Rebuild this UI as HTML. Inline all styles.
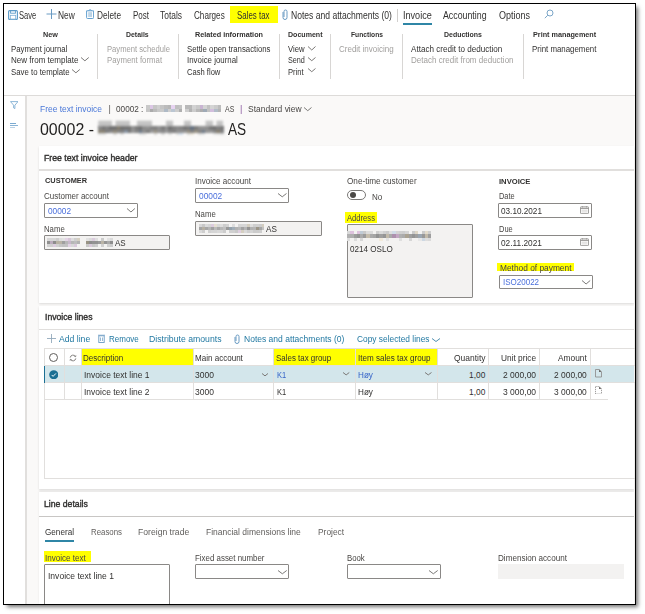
<!DOCTYPE html>
<html><head><meta charset="utf-8"><style>
html,body{margin:0;padding:0;width:645px;height:614px;overflow:hidden;background:#fff}
body{position:relative;font-family:"Liberation Sans",sans-serif}
.t{position:absolute;white-space:nowrap}
.r{position:absolute}
.blur{position:absolute;filter:blur(1px);opacity:0.9}
#clip{position:absolute;left:0;top:0;width:645px;height:614px;clip-path:inset(4px 10px 10px 4px);background:#fff}
#frame{position:absolute;left:3px;top:3px;width:631px;height:600px;border:1px solid #000;box-shadow:3px 3px 4px -1px rgba(0,0,0,0.55)}
</style></head><body>
<div id="clip">
<div class="r" style="left:27px;top:96px;width:608px;height:508px;background:#faf9f8"></div>
<div class="r" style="left:25px;top:96px;width:1.6px;height:508px;background:#e1dfdd"></div>
<div class="r" style="left:4px;top:94.6px;width:631px;height:1.4px;background:#dddbd9"></div>
<svg class="r" style="left:7.5px;top:9.5px" width="10" height="10" viewBox="0 0 10 10"><rect x="0.6" y="0.6" width="8.8" height="8.8" rx="1" fill="none" stroke="#5a9ac8" stroke-width="1.1"/><rect x="2.6" y="0.6" width="4.8" height="2.6" fill="none" stroke="#5a9ac8" stroke-width="0.9"/><rect x="2.3" y="5.3" width="5.4" height="4.1" fill="none" stroke="#7aaed4" stroke-width="0.8"/></svg>
<div class="t" style="left:18.50px;top:12.00px;font-size:9.3px;line-height:9.3px;color:#323130;font-weight:400;transform:scale(0.8159,1.1667);transform-origin:0 7px;">Save</div>
<svg class="r" style="left:46px;top:9px" width="11" height="10" viewBox="0 0 11 10"><path d="M5.5 0 V10 M0.5 5 H10.5" stroke="#6a9bc3" stroke-width="1" fill="none"/></svg>
<div class="t" style="left:57.70px;top:12.00px;font-size:9.3px;line-height:9.3px;color:#323130;font-weight:400;transform:scale(0.9010,1.1667);transform-origin:0 7px;">New</div>
<svg class="r" style="left:86px;top:9px" width="8.2" height="10" viewBox="0 0 8.2 10"><path d="M2.4 1.6 Q4.1 -0.2 5.8 1.6" fill="none" stroke="#4f94c8" stroke-width="0.9"/><path d="M0.6 1.8 H7.6 V8.6 Q7.6 9.5 6.7 9.5 H1.5 Q0.6 9.5 0.6 8.6 Z" fill="none" stroke="#62a0d0" stroke-width="1"/><path d="M2.9 3.2 V8 M4.1 3.2 V8 M5.3 3.2 V8" stroke="#7aa8cc" stroke-width="0.7"/></svg>
<div class="t" style="left:97.00px;top:12.00px;font-size:9.3px;line-height:9.3px;color:#323130;font-weight:400;transform:scale(0.8930,1.1667);transform-origin:0 7px;">Delete</div>
<div class="t" style="left:133.00px;top:12.00px;font-size:9.3px;line-height:9.3px;color:#323130;font-weight:400;transform:scale(0.8602,1.1667);transform-origin:0 7px;">Post</div>
<div class="t" style="left:160.30px;top:12.00px;font-size:9.3px;line-height:9.3px;color:#323130;font-weight:400;transform:scale(0.9064,1.1667);transform-origin:0 7px;">Totals</div>
<div class="t" style="left:193.70px;top:12.00px;font-size:9.3px;line-height:9.3px;color:#323130;font-weight:400;transform:scale(0.8733,1.1667);transform-origin:0 7px;">Charges</div>
<div class="r" style="left:230px;top:6px;width:48.4px;height:17.3px;background:#ffff00"></div>
<div class="t" style="left:236.50px;top:12.00px;font-size:9.3px;line-height:9.3px;color:#323130;font-weight:400;transform:scale(0.8492,1.1667);transform-origin:0 7px;">Sales tax</div>
<svg class="r" style="left:282px;top:8.5px" width="6" height="11" viewBox="0 0 6 11"><path d="M1 3 V8.5 A2 2 0 0 0 5 8.5 V2.5 A1.5 1.5 0 0 0 2 2.5 V8" fill="none" stroke="#6a9bc3" stroke-width="1"/></svg>
<div class="t" style="left:291.00px;top:12.00px;font-size:9.3px;line-height:9.3px;color:#323130;font-weight:400;transform:scale(0.9215,1.1667);transform-origin:0 7px;">Notes and attachments (0)</div>
<div class="r" style="left:396.5px;top:9px;width:1px;height:13px;background:#d2d0ce"></div>
<div class="t" style="left:403.00px;top:12.00px;font-size:9.3px;line-height:9.3px;color:#323130;font-weight:400;transform:scale(0.9769,1.1667);transform-origin:0 7px;">Invoice</div>
<div class="r" style="left:403px;top:23px;width:29px;height:1.6px;background:#2f86a6"></div>
<div class="t" style="left:443.40px;top:12.00px;font-size:9.3px;line-height:9.3px;color:#323130;font-weight:400;transform:scale(0.9471,1.1667);transform-origin:0 7px;">Accounting</div>
<div class="t" style="left:499.00px;top:12.00px;font-size:9.3px;line-height:9.3px;color:#323130;font-weight:400;transform:scale(0.9676,1.1667);transform-origin:0 7px;">Options</div>
<svg class="r" style="left:544px;top:9px" width="10" height="10" viewBox="0 0 10 10"><circle cx="6" cy="4" r="3" fill="none" stroke="#7ba6c8" stroke-width="1"/><path d="M3.8 6.2 L0.8 9.2" stroke="#7ba6c8" stroke-width="1"/></svg>
<div class="t" style="left:42.80px;top:31.00px;font-size:7.2px;line-height:7.2px;color:#323130;font-weight:700;transform:scale(1.0046,1.0000);transform-origin:0 6px;">New</div>
<div class="t" style="left:10.60px;top:45.00px;font-size:8.3px;line-height:8.3px;color:#323130;font-weight:400;transform:scale(0.9405,1.0000);transform-origin:0 7px;">Payment journal</div>
<div class="t" style="left:10.60px;top:56.00px;font-size:8.3px;line-height:8.3px;color:#323130;font-weight:400;transform:scale(0.9679,1.0000);transform-origin:0 7px;">New from template</div>
<svg class="r" style="left:80.1px;top:56px;overflow:visible" width="9.80" height="6.30" viewBox="0 0 9.80 6.30"><path d="M1 1.50 L4.90 4.80 L8.80 1.50" fill="none" stroke="#7a7876" stroke-width="1"/></svg>
<div class="t" style="left:10.60px;top:68.00px;font-size:8.3px;line-height:8.3px;color:#323130;font-weight:400;transform:scale(0.9407,1.0000);transform-origin:0 7px;">Save to template</div>
<svg class="r" style="left:71.1px;top:67.5px;overflow:visible" width="9.80" height="6.30" viewBox="0 0 9.80 6.30"><path d="M1 1.50 L4.90 4.80 L8.80 1.50" fill="none" stroke="#7a7876" stroke-width="1"/></svg>
<div class="r" style="left:97px;top:34px;width:1px;height:45px;background:#d8d6d4"></div>
<div class="t" style="left:126.30px;top:31.00px;font-size:7.2px;line-height:7.2px;color:#323130;font-weight:700;transform:scale(0.9612,1.0000);transform-origin:0 6px;">Details</div>
<div class="t" style="left:106.50px;top:45.00px;font-size:8.3px;line-height:8.3px;color:#a19f9d;font-weight:400;transform:scale(0.9214,1.0000);transform-origin:0 7px;">Payment schedule</div>
<div class="t" style="left:106.50px;top:56.00px;font-size:8.3px;line-height:8.3px;color:#a19f9d;font-weight:400;transform:scale(0.9403,1.0000);transform-origin:0 7px;">Payment format</div>
<div class="r" style="left:177.5px;top:34px;width:1px;height:45px;background:#d8d6d4"></div>
<div class="t" style="left:194.90px;top:31.00px;font-size:7.2px;line-height:7.2px;color:#323130;font-weight:700;transform:scale(1.0073,1.0000);transform-origin:0 6px;">Related information</div>
<div class="t" style="left:187.00px;top:45.00px;font-size:8.3px;line-height:8.3px;color:#323130;font-weight:400;transform:scale(0.9376,1.0000);transform-origin:0 7px;">Settle open transactions</div>
<div class="t" style="left:187.00px;top:56.00px;font-size:8.3px;line-height:8.3px;color:#323130;font-weight:400;transform:scale(0.9489,1.0000);transform-origin:0 7px;">Invoice journal</div>
<div class="t" style="left:187.00px;top:68.00px;font-size:8.3px;line-height:8.3px;color:#323130;font-weight:400;transform:scale(0.9156,1.0000);transform-origin:0 7px;">Cash flow</div>
<div class="r" style="left:278.5px;top:34px;width:1px;height:45px;background:#d8d6d4"></div>
<div class="t" style="left:288.00px;top:31.00px;font-size:7.2px;line-height:7.2px;color:#323130;font-weight:700;transform:scale(0.9827,1.0000);transform-origin:0 6px;">Document</div>
<div class="t" style="left:288.40px;top:45.00px;font-size:8.3px;line-height:8.3px;color:#323130;font-weight:400;transform:scale(0.9302,1.0000);transform-origin:0 7px;">View</div>
<svg class="r" style="left:307.2px;top:45.1px;overflow:visible" width="9.50" height="6.50" viewBox="0 0 9.50 6.50"><path d="M1 1.50 L4.75 5.00 L8.50 1.50" fill="none" stroke="#7a7876" stroke-width="1"/></svg>
<div class="t" style="left:288.40px;top:56.00px;font-size:8.3px;line-height:8.3px;color:#323130;font-weight:400;transform:scale(0.8720,1.0000);transform-origin:0 7px;">Send</div>
<svg class="r" style="left:307.2px;top:56.3px;overflow:visible" width="9.50" height="6.20" viewBox="0 0 9.50 6.20"><path d="M1 1.50 L4.75 4.70 L8.50 1.50" fill="none" stroke="#7a7876" stroke-width="1"/></svg>
<div class="t" style="left:288.40px;top:68.00px;font-size:8.3px;line-height:8.3px;color:#323130;font-weight:400;transform:scale(0.9146,1.0000);transform-origin:0 7px;">Print</div>
<svg class="r" style="left:307.2px;top:67.4px;overflow:visible" width="9.50" height="6.20" viewBox="0 0 9.50 6.20"><path d="M1 1.50 L4.75 4.70 L8.50 1.50" fill="none" stroke="#7a7876" stroke-width="1"/></svg>
<div class="r" style="left:330px;top:34px;width:1px;height:45px;background:#d8d6d4"></div>
<div class="t" style="left:350.60px;top:31.00px;font-size:7.2px;line-height:7.2px;color:#323130;font-weight:700;transform:scale(0.9298,1.0000);transform-origin:0 6px;">Functions</div>
<div class="t" style="left:339.00px;top:45.00px;font-size:8.3px;line-height:8.3px;color:#a19f9d;font-weight:400;transform:scale(0.9642,1.0000);transform-origin:0 7px;">Credit invoicing</div>
<div class="r" style="left:402px;top:34px;width:1px;height:45px;background:#d8d6d4"></div>
<div class="t" style="left:444.00px;top:31.00px;font-size:7.2px;line-height:7.2px;color:#323130;font-weight:700;transform:scale(0.9693,1.0000);transform-origin:0 6px;">Deductions</div>
<div class="t" style="left:411.40px;top:45.00px;font-size:8.3px;line-height:8.3px;color:#323130;font-weight:400;transform:scale(0.9758,1.0000);transform-origin:0 7px;">Attach credit to deduction</div>
<div class="t" style="left:411.40px;top:56.00px;font-size:8.3px;line-height:8.3px;color:#a19f9d;font-weight:400;transform:scale(0.9669,1.0000);transform-origin:0 7px;">Detach credit from deduction</div>
<div class="r" style="left:522.7px;top:34px;width:1px;height:45px;background:#d8d6d4"></div>
<div class="t" style="left:532.60px;top:31.00px;font-size:7.2px;line-height:7.2px;color:#323130;font-weight:700;transform:scale(1.0076,1.0000);transform-origin:0 6px;">Print management</div>
<div class="t" style="left:531.60px;top:45.00px;font-size:8.3px;line-height:8.3px;color:#323130;font-weight:400;transform:scale(0.9497,1.0000);transform-origin:0 7px;">Print management</div>
<svg class="r" style="left:9.6px;top:101px" width="8.5" height="8" viewBox="0 0 8.5 8"><path d="M0.5 0.6 H8 L4.9 4.2 V7.6 L3.6 6.9 V4.2 Z" fill="none" stroke="#7aaad0" stroke-width="0.85"/></svg>
<div class="r" style="left:10px;top:122.7px;width:6px;height:1px;background:#7aaad0"></div>
<div class="r" style="left:10px;top:124.8px;width:8px;height:1px;background:#8ab4d6"></div>
<div class="r" style="left:10px;top:126.8px;width:5px;height:1px;background:#bcd2e4"></div>
<div class="t" style="left:40.00px;top:105.00px;font-size:9.1px;line-height:9.1px;color:#4a78d8;font-weight:400;transform:scale(0.9289,1.0833);transform-origin:0 7px;">Free text invoice</div>
<div class="t" style="left:108.50px;top:105.00px;font-size:9.1px;line-height:9.1px;color:#605e5c;font-weight:400;transform:scale(1.0000,1.0833);transform-origin:0 7px;">|</div>
<div class="t" style="left:115.60px;top:105.00px;font-size:9.1px;line-height:9.1px;color:#484644;font-weight:400;transform:scale(0.9028,1.0833);transform-origin:0 7px;">00002 :</div>
<svg class="r" style="left:145.6px;top:104.9px;" width="36.20" height="7.00" viewBox="0 0 36.20 7.00" shape-rendering="crispEdges"><rect x="0.00" y="0.00" width="3.67" height="3.55" fill="rgb(201,201,201)"/><rect x="3.62" y="0.00" width="3.67" height="3.55" fill="rgb(219,199,229)"/><rect x="7.24" y="0.00" width="3.67" height="3.55" fill="rgb(198,198,198)"/><rect x="10.86" y="0.00" width="3.67" height="3.55" fill="rgb(207,207,207)"/><rect x="14.48" y="0.00" width="3.67" height="3.55" fill="rgb(196,196,196)"/><rect x="18.10" y="0.00" width="3.67" height="3.55" fill="rgb(187,187,187)"/><rect x="21.72" y="0.00" width="3.67" height="3.55" fill="rgb(182,182,182)"/><rect x="25.34" y="0.00" width="3.67" height="3.55" fill="rgb(231,211,241)"/><rect x="28.96" y="0.00" width="3.67" height="3.55" fill="rgb(191,191,191)"/><rect x="32.58" y="0.00" width="3.67" height="3.55" fill="rgb(195,195,195)"/><rect x="0.00" y="3.50" width="3.67" height="3.55" fill="rgb(198,198,198)"/><rect x="3.62" y="3.50" width="3.67" height="3.55" fill="rgb(171,171,171)"/><rect x="7.24" y="3.50" width="3.67" height="3.55" fill="rgb(187,187,187)"/><rect x="10.86" y="3.50" width="3.67" height="3.55" fill="rgb(200,200,200)"/><rect x="14.48" y="3.50" width="3.67" height="3.55" fill="rgb(202,202,202)"/><rect x="18.10" y="3.50" width="3.67" height="3.55" fill="rgb(175,186,198)"/><rect x="21.72" y="3.50" width="3.67" height="3.55" fill="rgb(206,206,206)"/><rect x="25.34" y="3.50" width="3.67" height="3.55" fill="rgb(187,198,210)"/><rect x="28.96" y="3.50" width="3.67" height="3.55" fill="rgb(205,205,205)"/><rect x="32.58" y="3.50" width="3.67" height="3.55" fill="rgb(175,175,175)"/></svg>
<svg class="r" style="left:185.3px;top:104.9px;" width="36.30" height="7.00" viewBox="0 0 36.30 7.00" shape-rendering="crispEdges"><rect x="0.00" y="0.00" width="3.68" height="3.55" fill="rgb(185,185,185)"/><rect x="3.63" y="0.00" width="3.68" height="3.55" fill="rgb(184,184,184)"/><rect x="7.26" y="0.00" width="3.68" height="3.55" fill="rgb(210,210,210)"/><rect x="10.89" y="0.00" width="3.68" height="3.55" fill="rgb(201,201,201)"/><rect x="14.52" y="0.00" width="3.68" height="3.55" fill="rgb(200,180,210)"/><rect x="18.15" y="0.00" width="3.68" height="3.55" fill="rgb(211,211,211)"/><rect x="21.78" y="0.00" width="3.68" height="3.55" fill="rgb(193,193,193)"/><rect x="25.41" y="0.00" width="3.68" height="3.55" fill="rgb(212,212,212)"/><rect x="29.04" y="0.00" width="3.68" height="3.55" fill="rgb(203,203,203)"/><rect x="32.67" y="0.00" width="3.68" height="3.55" fill="rgb(188,188,188)"/><rect x="0.00" y="3.50" width="3.68" height="3.55" fill="rgb(207,207,207)"/><rect x="3.63" y="3.50" width="3.68" height="3.55" fill="rgb(179,179,179)"/><rect x="7.26" y="3.50" width="3.68" height="3.55" fill="rgb(204,204,204)"/><rect x="10.89" y="3.50" width="3.68" height="3.55" fill="rgb(184,184,184)"/><rect x="14.52" y="3.50" width="3.68" height="3.55" fill="rgb(173,173,173)"/><rect x="18.15" y="3.50" width="3.68" height="3.55" fill="rgb(159,170,182)"/><rect x="21.78" y="3.50" width="3.68" height="3.55" fill="rgb(194,194,194)"/><rect x="25.41" y="3.50" width="3.68" height="3.55" fill="rgb(210,190,220)"/><rect x="29.04" y="3.50" width="3.68" height="3.55" fill="rgb(177,188,200)"/><rect x="32.67" y="3.50" width="3.68" height="3.55" fill="rgb(180,180,180)"/></svg>
<div class="t" style="left:224.70px;top:105.00px;font-size:9.1px;line-height:9.1px;color:#484644;font-weight:400;transform:scale(0.7655,1.0833);transform-origin:0 7px;">AS</div>
<div class="t" style="left:240.00px;top:105.00px;font-size:9.1px;line-height:9.1px;color:#8a5aa0;font-weight:400;transform:scale(1.0000,1.0833);transform-origin:0 7px;">|</div>
<div class="t" style="left:248.00px;top:105.00px;font-size:9.1px;line-height:9.1px;color:#484644;font-weight:400;transform:scale(0.9290,1.0833);transform-origin:0 7px;">Standard view</div>
<svg class="r" style="left:303px;top:105.7px;overflow:visible" width="9.50" height="6.20" viewBox="0 0 9.50 6.20"><path d="M1 1.50 L4.75 4.70 L8.50 1.50" fill="none" stroke="#7a7876" stroke-width="1"/></svg>
<div class="t" style="left:40.00px;top:122.00px;font-size:15.2px;line-height:15.2px;color:#201f1e;font-weight:400;transform:scale(1.0480,1.1000);transform-origin:0 13px;">00002 -</div>
<svg class="r" style="left:96px;top:118px;filter:blur(0.9px)" width="132" height="20" viewBox="0 0 132 20"><rect x="2.2" y="2.7" width="13.8" height="6.5" fill="#c4c4c4"/><rect x="19.5" y="2.7" width="14.5" height="6.5" fill="#c4c4c4"/><rect x="41.0" y="2.7" width="15.0" height="6.5" fill="#c4c4c4"/><rect x="70.0" y="2.7" width="7.0" height="6.5" fill="#c4c4c4"/><rect x="88.0" y="2.7" width="7.0" height="6.5" fill="#c4c4c4"/><rect x="109.6" y="2.7" width="7.4" height="6.5" fill="#c4c4c4"/><rect x="120.5" y="2.7" width="6.5" height="6.5" fill="#c4c4c4"/></svg>
<svg class="r" style="left:98.2px;top:126.2px;filter:blur(1px)" width="125.80" height="9.40" viewBox="0 0 125.80 9.40" shape-rendering="crispEdges"><rect x="0.00" y="0.00" width="3.75" height="3.65" fill="rgb(136,136,136)"/><rect x="3.70" y="0.00" width="3.75" height="3.65" fill="rgb(119,119,119)"/><rect x="7.40" y="0.00" width="3.75" height="3.65" fill="rgb(130,130,130)"/><rect x="11.10" y="0.00" width="3.75" height="3.65" fill="rgb(112,112,112)"/><rect x="14.80" y="0.00" width="3.75" height="3.65" fill="rgb(114,114,114)"/><rect x="18.50" y="0.00" width="3.75" height="3.65" fill="rgb(132,125,110)"/><rect x="22.20" y="0.00" width="3.75" height="3.65" fill="rgb(113,113,113)"/><rect x="25.90" y="0.00" width="3.75" height="3.65" fill="rgb(116,116,116)"/><rect x="29.60" y="0.00" width="3.75" height="3.65" fill="rgb(117,117,117)"/><rect x="33.30" y="0.00" width="3.75" height="3.65" fill="rgb(145,145,145)"/><rect x="37.00" y="0.00" width="3.75" height="3.65" fill="rgb(124,124,124)"/><rect x="40.70" y="0.00" width="3.75" height="3.65" fill="rgb(113,113,113)"/><rect x="44.40" y="0.00" width="3.75" height="3.65" fill="rgb(140,140,140)"/><rect x="48.10" y="0.00" width="3.75" height="3.65" fill="rgb(144,144,144)"/><rect x="51.80" y="0.00" width="3.75" height="3.65" fill="rgb(132,132,132)"/><rect x="55.50" y="0.00" width="3.75" height="3.65" fill="rgb(129,129,129)"/><rect x="59.20" y="0.00" width="3.75" height="3.65" fill="rgb(145,145,145)"/><rect x="62.90" y="0.00" width="3.75" height="3.65" fill="rgb(125,125,125)"/><rect x="66.60" y="0.00" width="3.75" height="3.65" fill="rgb(147,147,147)"/><rect x="70.30" y="0.00" width="3.75" height="3.65" fill="rgb(115,115,115)"/><rect x="74.00" y="0.00" width="3.75" height="3.65" fill="rgb(129,129,129)"/><rect x="77.70" y="0.00" width="3.75" height="3.65" fill="rgb(138,138,138)"/><rect x="81.40" y="0.00" width="3.75" height="3.65" fill="rgb(132,132,132)"/><rect x="85.10" y="0.00" width="3.75" height="3.65" fill="rgb(118,118,118)"/><rect x="88.80" y="0.00" width="3.75" height="3.65" fill="rgb(124,124,124)"/><rect x="92.50" y="0.00" width="3.75" height="3.65" fill="rgb(103,115,130)"/><rect x="96.20" y="0.00" width="3.75" height="3.65" fill="rgb(125,125,125)"/><rect x="99.90" y="0.00" width="3.75" height="3.65" fill="rgb(144,144,144)"/><rect x="103.60" y="0.00" width="3.75" height="3.65" fill="rgb(147,147,147)"/><rect x="107.30" y="0.00" width="3.75" height="3.65" fill="rgb(143,143,143)"/><rect x="111.00" y="0.00" width="3.75" height="3.65" fill="rgb(120,120,120)"/><rect x="114.70" y="0.00" width="3.75" height="3.65" fill="rgb(114,114,114)"/><rect x="118.40" y="0.00" width="3.75" height="3.65" fill="rgb(129,129,129)"/><rect x="122.10" y="0.00" width="3.75" height="3.65" fill="rgb(121,121,121)"/><rect x="0.00" y="3.60" width="3.75" height="3.65" fill="rgb(138,131,116)"/><rect x="3.70" y="3.60" width="3.75" height="3.65" fill="rgb(137,130,115)"/><rect x="7.40" y="3.60" width="3.75" height="3.65" fill="rgb(125,125,125)"/><rect x="11.10" y="3.60" width="3.75" height="3.65" fill="rgb(137,137,137)"/><rect x="14.80" y="3.60" width="3.75" height="3.65" fill="rgb(145,138,123)"/><rect x="18.50" y="3.60" width="3.75" height="3.65" fill="rgb(135,135,135)"/><rect x="22.20" y="3.60" width="3.75" height="3.65" fill="rgb(131,131,131)"/><rect x="25.90" y="3.60" width="3.75" height="3.65" fill="rgb(135,147,162)"/><rect x="29.60" y="3.60" width="3.75" height="3.65" fill="rgb(120,120,120)"/><rect x="33.30" y="3.60" width="3.75" height="3.65" fill="rgb(150,150,150)"/><rect x="37.00" y="3.60" width="3.75" height="3.65" fill="rgb(134,134,134)"/><rect x="40.70" y="3.60" width="3.75" height="3.65" fill="rgb(112,124,139)"/><rect x="44.40" y="3.60" width="3.75" height="3.65" fill="rgb(143,143,143)"/><rect x="48.10" y="3.60" width="3.75" height="3.65" fill="rgb(124,124,124)"/><rect x="51.80" y="3.60" width="3.75" height="3.65" fill="rgb(153,153,153)"/><rect x="55.50" y="3.60" width="3.75" height="3.65" fill="rgb(154,147,132)"/><rect x="59.20" y="3.60" width="3.75" height="3.65" fill="rgb(146,146,146)"/><rect x="62.90" y="3.60" width="3.75" height="3.65" fill="rgb(138,138,138)"/><rect x="66.60" y="3.60" width="3.75" height="3.65" fill="rgb(153,153,153)"/><rect x="70.30" y="3.60" width="3.75" height="3.65" fill="rgb(134,134,134)"/><rect x="74.00" y="3.60" width="3.75" height="3.65" fill="rgb(128,128,128)"/><rect x="77.70" y="3.60" width="3.75" height="3.65" fill="rgb(146,146,146)"/><rect x="81.40" y="3.60" width="3.75" height="3.65" fill="rgb(146,146,146)"/><rect x="85.10" y="3.60" width="3.75" height="3.65" fill="rgb(148,148,148)"/><rect x="88.80" y="3.60" width="3.75" height="3.65" fill="rgb(151,144,129)"/><rect x="92.50" y="3.60" width="3.75" height="3.65" fill="rgb(131,131,131)"/><rect x="96.20" y="3.60" width="3.75" height="3.65" fill="rgb(152,145,130)"/><rect x="99.90" y="3.60" width="3.75" height="3.65" fill="rgb(132,132,132)"/><rect x="103.60" y="3.60" width="3.75" height="3.65" fill="rgb(111,123,138)"/><rect x="107.30" y="3.60" width="3.75" height="3.65" fill="rgb(149,149,149)"/><rect x="111.00" y="3.60" width="3.75" height="3.65" fill="rgb(154,154,154)"/><rect x="114.70" y="3.60" width="3.75" height="3.65" fill="rgb(136,136,136)"/><rect x="118.40" y="3.60" width="3.75" height="3.65" fill="rgb(134,127,112)"/><rect x="122.10" y="3.60" width="3.75" height="3.65" fill="rgb(129,129,129)"/><rect x="0.00" y="7.20" width="3.75" height="2.25" fill="rgb(220,220,220)"/><rect x="3.70" y="7.20" width="3.75" height="2.25" fill="rgb(219,219,219)"/><rect x="14.80" y="7.20" width="3.75" height="2.25" fill="rgb(216,216,216)"/><rect x="22.20" y="7.20" width="3.75" height="2.25" fill="rgb(221,221,221)"/><rect x="40.70" y="7.20" width="3.75" height="2.25" fill="rgb(221,221,221)"/><rect x="44.40" y="7.20" width="3.75" height="2.25" fill="rgb(220,220,220)"/><rect x="55.50" y="7.20" width="3.75" height="2.25" fill="rgb(217,217,217)"/><rect x="62.90" y="7.20" width="3.75" height="2.25" fill="rgb(216,216,216)"/><rect x="70.30" y="7.20" width="3.75" height="2.25" fill="rgb(225,225,225)"/><rect x="77.70" y="7.20" width="3.75" height="2.25" fill="rgb(220,220,220)"/><rect x="81.40" y="7.20" width="3.75" height="2.25" fill="rgb(211,223,238)"/><rect x="88.80" y="7.20" width="3.75" height="2.25" fill="rgb(218,218,218)"/><rect x="92.50" y="7.20" width="3.75" height="2.25" fill="rgb(236,229,214)"/><rect x="99.90" y="7.20" width="3.75" height="2.25" fill="rgb(220,220,220)"/><rect x="103.60" y="7.20" width="3.75" height="2.25" fill="rgb(224,224,224)"/><rect x="114.70" y="7.20" width="3.75" height="2.25" fill="rgb(229,229,229)"/><rect x="118.40" y="7.20" width="3.75" height="2.25" fill="rgb(224,224,224)"/><rect x="122.10" y="7.20" width="3.75" height="2.25" fill="rgb(215,215,215)"/></svg>
<div class="t" style="left:227.60px;top:122.00px;font-size:15.2px;line-height:15.2px;color:#201f1e;font-weight:400;transform:scale(0.8969,1.1000);transform-origin:0 13px;">AS</div>
<div class="r" style="left:39px;top:146px;width:595px;height:157px;background:#fff;box-shadow:0 1px 2px rgba(0,0,0,0.12)"></div>
<div class="t" style="left:44.10px;top:154.00px;font-size:9.1px;line-height:9.1px;color:#323130;font-weight:400;transform:scale(0.9586,1.0000);transform-origin:0 7px;-webkit-text-stroke:0.4px #323130">Free text invoice header</div>
<div class="r" style="left:39px;top:169.3px;width:595px;height:1.5px;background:#e1dfdd"></div>
<div class="t" style="left:44.70px;top:177.00px;font-size:7.7px;line-height:7.7px;color:#323130;font-weight:700;transform:scale(0.9607,1.0000);transform-origin:0 6px;">CUSTOMER</div>
<div class="t" style="left:44.40px;top:192.00px;font-size:8.6px;line-height:8.6px;color:#484644;font-weight:400;transform:scale(0.9314,1.0000);transform-origin:0 7px;">Customer account</div>
<div class="r" style="left:44px;top:203px;width:94px;height:15px;background:#fff;border:1px solid #8a8886;box-sizing:border-box;border-radius:1px"></div>
<div class="t" style="left:47.80px;top:207.00px;font-size:8.6px;line-height:8.6px;color:#4a6fdc;font-weight:400;transform:scale(0.9662,1.0000);transform-origin:0 7px;">00002</div>
<svg class="r" style="left:126.1px;top:207.1px;overflow:visible" width="9.90" height="6.50" viewBox="0 0 9.90 6.50"><path d="M1 1.50 L4.95 5.00 L8.90 1.50" fill="none" stroke="#7a7876" stroke-width="1"/></svg>
<div class="t" style="left:44.40px;top:225.00px;font-size:8.6px;line-height:8.6px;color:#484644;font-weight:400;transform:scale(0.9058,1.0000);transform-origin:0 7px;">Name</div>
<div class="r" style="left:44px;top:235px;width:126px;height:15px;background:#f3f2f1;border:1px solid #8a8886;box-sizing:border-box;border-radius:1px"></div>
<svg class="r" style="left:47px;top:238px;" width="66.00" height="9.00" viewBox="0 0 66.00 9.00" shape-rendering="crispEdges"><rect x="0.00" y="0.00" width="3.05" height="3.05" fill="rgb(216,216,216)"/><rect x="3.00" y="0.00" width="3.05" height="3.05" fill="rgb(215,215,215)"/><rect x="6.00" y="0.00" width="3.05" height="3.05" fill="rgb(215,215,215)"/><rect x="9.00" y="0.00" width="3.05" height="3.05" fill="rgb(205,205,205)"/><rect x="12.00" y="0.00" width="3.05" height="3.05" fill="rgb(222,222,222)"/><rect x="15.00" y="0.00" width="3.05" height="3.05" fill="rgb(226,226,226)"/><rect x="18.00" y="0.00" width="3.05" height="3.05" fill="rgb(227,211,229)"/><rect x="21.00" y="0.00" width="3.05" height="3.05" fill="rgb(214,198,216)"/><rect x="24.00" y="0.00" width="3.05" height="3.05" fill="rgb(221,221,221)"/><rect x="27.00" y="0.00" width="3.05" height="3.05" fill="rgb(207,207,207)"/><rect x="30.00" y="0.00" width="3.05" height="3.05" fill="rgb(213,207,193)"/><rect x="39.00" y="0.00" width="3.05" height="3.05" fill="rgb(226,226,226)"/><rect x="42.00" y="0.00" width="3.05" height="3.05" fill="rgb(219,219,219)"/><rect x="45.00" y="0.00" width="3.05" height="3.05" fill="rgb(219,203,221)"/><rect x="48.00" y="0.00" width="3.05" height="3.05" fill="rgb(223,223,223)"/><rect x="54.00" y="0.00" width="3.05" height="3.05" fill="rgb(203,203,203)"/><rect x="60.00" y="0.00" width="3.05" height="3.05" fill="rgb(226,226,226)"/><rect x="63.00" y="0.00" width="3.05" height="3.05" fill="rgb(218,218,218)"/><rect x="0.00" y="3.00" width="3.05" height="3.05" fill="rgb(144,144,144)"/><rect x="3.00" y="3.00" width="3.05" height="3.05" fill="rgb(187,171,189)"/><rect x="6.00" y="3.00" width="3.05" height="3.05" fill="rgb(140,140,140)"/><rect x="9.00" y="3.00" width="3.05" height="3.05" fill="rgb(184,178,164)"/><rect x="12.00" y="3.00" width="3.05" height="3.05" fill="rgb(186,180,166)"/><rect x="15.00" y="3.00" width="3.05" height="3.05" fill="rgb(159,159,159)"/><rect x="18.00" y="3.00" width="3.05" height="3.05" fill="rgb(183,183,183)"/><rect x="21.00" y="3.00" width="3.05" height="3.05" fill="rgb(199,183,201)"/><rect x="24.00" y="3.00" width="3.05" height="3.05" fill="rgb(182,182,182)"/><rect x="27.00" y="3.00" width="3.05" height="3.05" fill="rgb(189,189,189)"/><rect x="30.00" y="3.00" width="3.05" height="3.05" fill="rgb(178,178,178)"/><rect x="39.00" y="3.00" width="3.05" height="3.05" fill="rgb(153,147,133)"/><rect x="42.00" y="3.00" width="3.05" height="3.05" fill="rgb(140,140,140)"/><rect x="45.00" y="3.00" width="3.05" height="3.05" fill="rgb(146,146,146)"/><rect x="48.00" y="3.00" width="3.05" height="3.05" fill="rgb(146,146,146)"/><rect x="51.00" y="3.00" width="3.05" height="3.05" fill="rgb(155,155,155)"/><rect x="54.00" y="3.00" width="3.05" height="3.05" fill="rgb(186,180,166)"/><rect x="57.00" y="3.00" width="3.05" height="3.05" fill="rgb(149,149,149)"/><rect x="60.00" y="3.00" width="3.05" height="3.05" fill="rgb(170,170,170)"/><rect x="63.00" y="3.00" width="3.05" height="3.05" fill="rgb(141,141,141)"/><rect x="0.00" y="6.00" width="3.05" height="3.05" fill="rgb(209,209,209)"/><rect x="3.00" y="6.00" width="3.05" height="3.05" fill="rgb(207,207,207)"/><rect x="6.00" y="6.00" width="3.05" height="3.05" fill="rgb(220,204,222)"/><rect x="9.00" y="6.00" width="3.05" height="3.05" fill="rgb(208,208,208)"/><rect x="12.00" y="6.00" width="3.05" height="3.05" fill="rgb(198,198,198)"/><rect x="15.00" y="6.00" width="3.05" height="3.05" fill="rgb(194,194,194)"/><rect x="18.00" y="6.00" width="3.05" height="3.05" fill="rgb(194,194,194)"/><rect x="21.00" y="6.00" width="3.05" height="3.05" fill="rgb(226,210,228)"/><rect x="24.00" y="6.00" width="3.05" height="3.05" fill="rgb(216,216,216)"/><rect x="27.00" y="6.00" width="3.05" height="3.05" fill="rgb(217,201,219)"/><rect x="39.00" y="6.00" width="3.05" height="3.05" fill="rgb(201,201,201)"/><rect x="42.00" y="6.00" width="3.05" height="3.05" fill="rgb(217,201,219)"/><rect x="45.00" y="6.00" width="3.05" height="3.05" fill="rgb(200,200,200)"/><rect x="48.00" y="6.00" width="3.05" height="3.05" fill="rgb(206,206,206)"/><rect x="54.00" y="6.00" width="3.05" height="3.05" fill="rgb(209,209,209)"/><rect x="60.00" y="6.00" width="3.05" height="3.05" fill="rgb(209,209,209)"/><rect x="63.00" y="6.00" width="3.05" height="3.05" fill="rgb(203,203,203)"/></svg>
<div class="t" style="left:114.80px;top:239.00px;font-size:8.6px;line-height:8.6px;color:#323130;font-weight:400;transform:scale(0.9320,1.0000);transform-origin:0 7px;">AS</div>
<div class="t" style="left:195.40px;top:177.00px;font-size:8.6px;line-height:8.6px;color:#484644;font-weight:400;transform:scale(0.9386,1.0000);transform-origin:0 7px;">Invoice account</div>
<div class="r" style="left:195px;top:188px;width:94px;height:15px;background:#fff;border:1px solid #8a8886;box-sizing:border-box;border-radius:1px"></div>
<div class="t" style="left:199.00px;top:192.00px;font-size:8.6px;line-height:8.6px;color:#4a6fdc;font-weight:400;transform:scale(0.9704,1.0000);transform-origin:0 7px;">00002</div>
<svg class="r" style="left:277.2px;top:192px;overflow:visible" width="10.50" height="6.30" viewBox="0 0 10.50 6.30"><path d="M1 1.50 L5.25 4.80 L9.50 1.50" fill="none" stroke="#7a7876" stroke-width="1"/></svg>
<div class="t" style="left:195.40px;top:210.00px;font-size:8.6px;line-height:8.6px;color:#484644;font-weight:400;transform:scale(0.9058,1.0000);transform-origin:0 7px;">Name</div>
<div class="r" style="left:195px;top:221px;width:127px;height:15px;background:#f3f2f1;border:1px solid #8a8886;box-sizing:border-box;border-radius:1px"></div>
<svg class="r" style="left:198.6px;top:223.5px;" width="65.80" height="9.00" viewBox="0 0 65.80 9.00" shape-rendering="crispEdges"><rect x="0.00" y="0.00" width="3.04" height="3.05" fill="rgb(215,215,215)"/><rect x="2.99" y="0.00" width="3.04" height="3.05" fill="rgb(200,200,200)"/><rect x="5.98" y="0.00" width="3.04" height="3.05" fill="rgb(219,219,219)"/><rect x="8.97" y="0.00" width="3.04" height="3.05" fill="rgb(213,213,213)"/><rect x="11.96" y="0.00" width="3.04" height="3.05" fill="rgb(220,204,222)"/><rect x="14.95" y="0.00" width="3.04" height="3.05" fill="rgb(229,223,209)"/><rect x="17.95" y="0.00" width="3.04" height="3.05" fill="rgb(216,216,216)"/><rect x="20.94" y="0.00" width="3.04" height="3.05" fill="rgb(222,222,222)"/><rect x="23.93" y="0.00" width="3.04" height="3.05" fill="rgb(205,205,205)"/><rect x="26.92" y="0.00" width="3.04" height="3.05" fill="rgb(210,210,210)"/><rect x="32.90" y="0.00" width="3.04" height="3.05" fill="rgb(221,221,221)"/><rect x="38.88" y="0.00" width="3.04" height="3.05" fill="rgb(213,213,213)"/><rect x="41.87" y="0.00" width="3.04" height="3.05" fill="rgb(214,214,214)"/><rect x="44.86" y="0.00" width="3.04" height="3.05" fill="rgb(214,214,214)"/><rect x="47.85" y="0.00" width="3.04" height="3.05" fill="rgb(211,205,191)"/><rect x="50.85" y="0.00" width="3.04" height="3.05" fill="rgb(222,222,222)"/><rect x="53.84" y="0.00" width="3.04" height="3.05" fill="rgb(207,207,207)"/><rect x="56.83" y="0.00" width="3.04" height="3.05" fill="rgb(208,208,208)"/><rect x="59.82" y="0.00" width="3.04" height="3.05" fill="rgb(204,204,204)"/><rect x="62.81" y="0.00" width="3.04" height="3.05" fill="rgb(210,204,190)"/><rect x="0.00" y="3.00" width="3.04" height="3.05" fill="rgb(164,164,164)"/><rect x="2.99" y="3.00" width="3.04" height="3.05" fill="rgb(182,176,162)"/><rect x="5.98" y="3.00" width="3.04" height="3.05" fill="rgb(166,166,166)"/><rect x="8.97" y="3.00" width="3.04" height="3.05" fill="rgb(181,181,181)"/><rect x="11.96" y="3.00" width="3.04" height="3.05" fill="rgb(161,161,161)"/><rect x="14.95" y="3.00" width="3.04" height="3.05" fill="rgb(187,187,187)"/><rect x="17.95" y="3.00" width="3.04" height="3.05" fill="rgb(168,168,168)"/><rect x="20.94" y="3.00" width="3.04" height="3.05" fill="rgb(183,183,183)"/><rect x="23.93" y="3.00" width="3.04" height="3.05" fill="rgb(192,192,192)"/><rect x="26.92" y="3.00" width="3.04" height="3.05" fill="rgb(153,153,153)"/><rect x="29.91" y="3.00" width="3.04" height="3.05" fill="rgb(149,161,171)"/><rect x="32.90" y="3.00" width="3.04" height="3.05" fill="rgb(162,174,184)"/><rect x="35.89" y="3.00" width="3.04" height="3.05" fill="rgb(178,178,178)"/><rect x="38.88" y="3.00" width="3.04" height="3.05" fill="rgb(184,184,184)"/><rect x="41.87" y="3.00" width="3.04" height="3.05" fill="rgb(162,162,162)"/><rect x="44.86" y="3.00" width="3.04" height="3.05" fill="rgb(181,181,181)"/><rect x="47.85" y="3.00" width="3.04" height="3.05" fill="rgb(147,147,147)"/><rect x="50.85" y="3.00" width="3.04" height="3.05" fill="rgb(177,177,177)"/><rect x="53.84" y="3.00" width="3.04" height="3.05" fill="rgb(181,181,181)"/><rect x="56.83" y="3.00" width="3.04" height="3.05" fill="rgb(155,149,135)"/><rect x="59.82" y="3.00" width="3.04" height="3.05" fill="rgb(166,166,166)"/><rect x="62.81" y="3.00" width="3.04" height="3.05" fill="rgb(193,193,193)"/><rect x="0.00" y="6.00" width="3.04" height="3.05" fill="rgb(218,218,218)"/><rect x="2.99" y="6.00" width="3.04" height="3.05" fill="rgb(206,206,206)"/><rect x="8.97" y="6.00" width="3.04" height="3.05" fill="rgb(209,209,209)"/><rect x="11.96" y="6.00" width="3.04" height="3.05" fill="rgb(213,213,213)"/><rect x="14.95" y="6.00" width="3.04" height="3.05" fill="rgb(213,213,213)"/><rect x="17.95" y="6.00" width="3.04" height="3.05" fill="rgb(217,217,217)"/><rect x="20.94" y="6.00" width="3.04" height="3.05" fill="rgb(214,214,214)"/><rect x="23.93" y="6.00" width="3.04" height="3.05" fill="rgb(204,204,204)"/><rect x="29.91" y="6.00" width="3.04" height="3.05" fill="rgb(208,208,208)"/><rect x="32.90" y="6.00" width="3.04" height="3.05" fill="rgb(208,208,208)"/><rect x="35.89" y="6.00" width="3.04" height="3.05" fill="rgb(201,201,201)"/><rect x="38.88" y="6.00" width="3.04" height="3.05" fill="rgb(222,206,224)"/><rect x="41.87" y="6.00" width="3.04" height="3.05" fill="rgb(213,207,193)"/><rect x="44.86" y="6.00" width="3.04" height="3.05" fill="rgb(218,218,218)"/><rect x="47.85" y="6.00" width="3.04" height="3.05" fill="rgb(207,207,207)"/><rect x="50.85" y="6.00" width="3.04" height="3.05" fill="rgb(212,212,212)"/><rect x="53.84" y="6.00" width="3.04" height="3.05" fill="rgb(203,203,203)"/><rect x="56.83" y="6.00" width="3.04" height="3.05" fill="rgb(204,204,204)"/><rect x="59.82" y="6.00" width="3.04" height="3.05" fill="rgb(206,206,206)"/></svg>
<div class="t" style="left:266.40px;top:225.00px;font-size:8.6px;line-height:8.6px;color:#323130;font-weight:400;transform:scale(0.9494,1.0000);transform-origin:0 7px;">AS</div>
<div class="t" style="left:346.70px;top:177.00px;font-size:8.6px;line-height:8.6px;color:#484644;font-weight:400;transform:scale(0.9529,1.0000);transform-origin:0 7px;">One-time customer</div>
<div class="r" style="left:346.6px;top:189.7px;width:19.4px;height:10px;background:#fff;border:1.2px solid #7a7876;box-sizing:border-box;border-radius:5px"></div>
<div class="r" style="left:349.8px;top:191.6px;width:6.5px;height:6.5px;border-radius:50%;background:#4a4846"></div>
<div class="t" style="left:371.70px;top:193.00px;font-size:8.6px;line-height:8.6px;color:#484644;font-weight:400;transform:scale(0.9357,1.0000);transform-origin:0 7px;">No</div>
<div class="r" style="left:345px;top:212.2px;width:32.2px;height:10.4px;background:#ffff00"></div>
<div class="t" style="left:347.00px;top:214.00px;font-size:8.6px;line-height:8.6px;color:#484644;font-weight:400;transform:scale(0.8871,1.0000);transform-origin:0 7px;">Address</div>
<div class="r" style="left:347px;top:224px;width:126px;height:73.5px;background:#f3f2f1;border:1px solid #8a8886;box-sizing:border-box;border-radius:1px"></div>
<svg class="r" style="left:347.4px;top:230.8px;" width="84.40" height="9.90" viewBox="0 0 84.40 9.90" shape-rendering="crispEdges"><rect x="0.00" y="0.00" width="3.30" height="3.35" fill="rgb(216,216,216)"/><rect x="3.25" y="0.00" width="3.30" height="3.35" fill="rgb(222,194,222)"/><rect x="9.74" y="0.00" width="3.30" height="3.35" fill="rgb(222,194,222)"/><rect x="12.98" y="0.00" width="3.30" height="3.35" fill="rgb(192,203,214)"/><rect x="16.23" y="0.00" width="3.30" height="3.35" fill="rgb(200,200,200)"/><rect x="19.48" y="0.00" width="3.30" height="3.35" fill="rgb(220,220,220)"/><rect x="22.72" y="0.00" width="3.30" height="3.35" fill="rgb(219,219,219)"/><rect x="29.22" y="0.00" width="3.30" height="3.35" fill="rgb(206,206,206)"/><rect x="32.46" y="0.00" width="3.30" height="3.35" fill="rgb(218,218,218)"/><rect x="35.71" y="0.00" width="3.30" height="3.35" fill="rgb(208,208,208)"/><rect x="38.95" y="0.00" width="3.30" height="3.35" fill="rgb(202,202,202)"/><rect x="42.20" y="0.00" width="3.30" height="3.35" fill="rgb(223,223,223)"/><rect x="45.45" y="0.00" width="3.30" height="3.35" fill="rgb(209,220,231)"/><rect x="48.69" y="0.00" width="3.30" height="3.35" fill="rgb(212,212,212)"/><rect x="51.94" y="0.00" width="3.30" height="3.35" fill="rgb(208,208,208)"/><rect x="55.18" y="0.00" width="3.30" height="3.35" fill="rgb(206,206,206)"/><rect x="58.43" y="0.00" width="3.30" height="3.35" fill="rgb(213,213,213)"/><rect x="64.92" y="0.00" width="3.30" height="3.35" fill="rgb(203,203,203)"/><rect x="68.17" y="0.00" width="3.30" height="3.35" fill="rgb(223,215,199)"/><rect x="74.66" y="0.00" width="3.30" height="3.35" fill="rgb(203,203,203)"/><rect x="77.91" y="0.00" width="3.30" height="3.35" fill="rgb(227,219,203)"/><rect x="81.15" y="0.00" width="3.30" height="3.35" fill="rgb(206,206,206)"/><rect x="0.00" y="3.30" width="3.30" height="3.35" fill="rgb(177,177,177)"/><rect x="3.25" y="3.30" width="3.30" height="3.35" fill="rgb(174,174,174)"/><rect x="6.49" y="3.30" width="3.30" height="3.35" fill="rgb(156,156,156)"/><rect x="9.74" y="3.30" width="3.30" height="3.35" fill="rgb(147,147,147)"/><rect x="12.98" y="3.30" width="3.30" height="3.35" fill="rgb(171,171,171)"/><rect x="16.23" y="3.30" width="3.30" height="3.35" fill="rgb(154,154,154)"/><rect x="19.48" y="3.30" width="3.30" height="3.35" fill="rgb(197,189,173)"/><rect x="22.72" y="3.30" width="3.30" height="3.35" fill="rgb(170,170,170)"/><rect x="25.97" y="3.30" width="3.30" height="3.35" fill="rgb(165,165,165)"/><rect x="29.22" y="3.30" width="3.30" height="3.35" fill="rgb(146,146,146)"/><rect x="32.46" y="3.30" width="3.30" height="3.35" fill="rgb(159,159,159)"/><rect x="35.71" y="3.30" width="3.30" height="3.35" fill="rgb(149,149,149)"/><rect x="38.95" y="3.30" width="3.30" height="3.35" fill="rgb(194,186,170)"/><rect x="42.20" y="3.30" width="3.30" height="3.35" fill="rgb(170,170,170)"/><rect x="45.45" y="3.30" width="3.30" height="3.35" fill="rgb(173,145,173)"/><rect x="48.69" y="3.30" width="3.30" height="3.35" fill="rgb(195,167,195)"/><rect x="51.94" y="3.30" width="3.30" height="3.35" fill="rgb(176,176,176)"/><rect x="55.18" y="3.30" width="3.30" height="3.35" fill="rgb(171,171,171)"/><rect x="58.43" y="3.30" width="3.30" height="3.35" fill="rgb(170,162,146)"/><rect x="61.68" y="3.30" width="3.30" height="3.35" fill="rgb(159,159,159)"/><rect x="64.92" y="3.30" width="3.30" height="3.35" fill="rgb(148,148,148)"/><rect x="68.17" y="3.30" width="3.30" height="3.35" fill="rgb(159,159,159)"/><rect x="71.42" y="3.30" width="3.30" height="3.35" fill="rgb(155,166,177)"/><rect x="74.66" y="3.30" width="3.30" height="3.35" fill="rgb(152,152,152)"/><rect x="77.91" y="3.30" width="3.30" height="3.35" fill="rgb(194,186,170)"/><rect x="81.15" y="3.30" width="3.30" height="3.35" fill="rgb(158,158,158)"/><rect x="0.00" y="6.60" width="3.30" height="3.35" fill="rgb(221,221,221)"/><rect x="6.49" y="6.60" width="3.30" height="3.35" fill="rgb(219,219,219)"/><rect x="12.98" y="6.60" width="3.30" height="3.35" fill="rgb(215,215,215)"/><rect x="32.46" y="6.60" width="3.30" height="3.35" fill="rgb(242,234,218)"/><rect x="38.95" y="6.60" width="3.30" height="3.35" fill="rgb(226,226,226)"/><rect x="51.94" y="6.60" width="3.30" height="3.35" fill="rgb(223,223,223)"/><rect x="61.68" y="6.60" width="3.30" height="3.35" fill="rgb(214,214,214)"/><rect x="71.42" y="6.60" width="3.30" height="3.35" fill="rgb(231,231,231)"/><rect x="74.66" y="6.60" width="3.30" height="3.35" fill="rgb(205,216,227)"/><rect x="77.91" y="6.60" width="3.30" height="3.35" fill="rgb(222,222,222)"/><rect x="81.15" y="6.60" width="3.30" height="3.35" fill="rgb(218,218,218)"/></svg>
<div class="t" style="left:349.90px;top:245.00px;font-size:8.6px;line-height:8.6px;color:#323130;font-weight:400;transform:scale(0.9404,1.0000);transform-origin:0 7px;">0214 OSLO</div>
<div class="t" style="left:498.60px;top:178.00px;font-size:7.7px;line-height:7.7px;color:#323130;font-weight:700;transform:scale(0.9922,1.0000);transform-origin:0 6px;">INVOICE</div>
<div class="t" style="left:498.60px;top:192.00px;font-size:8.6px;line-height:8.6px;color:#484644;font-weight:400;transform:scale(0.8652,1.0000);transform-origin:0 7px;">Date</div>
<div class="r" style="left:498px;top:202.8px;width:94px;height:15px;background:#fff;border:1px solid #8a8886;box-sizing:border-box;border-radius:1px"></div>
<div class="t" style="left:501.00px;top:207.00px;font-size:8.6px;line-height:8.6px;color:#323130;font-weight:400;transform:scale(0.9525,1.0000);transform-origin:0 7px;">03.10.2021</div>
<div class="t" style="left:498.60px;top:225.00px;font-size:8.6px;line-height:8.6px;color:#484644;font-weight:400;transform:scale(0.8681,1.0000);transform-origin:0 7px;">Due</div>
<div class="r" style="left:498px;top:235.3px;width:94px;height:15px;background:#fff;border:1px solid #8a8886;box-sizing:border-box;border-radius:1px"></div>
<div class="t" style="left:501.00px;top:239.00px;font-size:8.6px;line-height:8.6px;color:#323130;font-weight:400;transform:scale(0.9670,1.0000);transform-origin:0 7px;">02.11.2021</div>
<svg class="r" style="left:580.4px;top:205.9px" width="9" height="8" viewBox="0 0 9 8"><rect x="0.5" y="0.8" width="8" height="6.8" rx="0.6" fill="none" stroke="#9a9896" stroke-width="0.9"/><path d="M0.5 2.3 H8.5" stroke="#8a8886" stroke-width="1"/><path d="M1.5 4.2 H7.5 M1.5 5.9 H7.5" stroke="#c8c6c4" stroke-width="0.7"/><path d="M2.5 0 V1.5 M6.5 0 V1.5" stroke="#9a9896" stroke-width="0.7"/></svg>
<svg class="r" style="left:580.4px;top:238.4px" width="9" height="8" viewBox="0 0 9 8"><rect x="0.5" y="0.8" width="8" height="6.8" rx="0.6" fill="none" stroke="#9a9896" stroke-width="0.9"/><path d="M0.5 2.3 H8.5" stroke="#8a8886" stroke-width="1"/><path d="M1.5 4.2 H7.5 M1.5 5.9 H7.5" stroke="#c8c6c4" stroke-width="0.7"/><path d="M2.5 0 V1.5 M6.5 0 V1.5" stroke="#9a9896" stroke-width="0.7"/></svg>
<div class="r" style="left:497.4px;top:262.8px;width:76.4px;height:8.7px;background:#ffff00"></div>
<div class="t" style="left:499.90px;top:264.00px;font-size:8.6px;line-height:8.6px;color:#484644;font-weight:400;transform:scale(0.9713,1.0000);transform-origin:0 7px;">Method of payment</div>
<div class="r" style="left:499.4px;top:274.7px;width:93.6px;height:14.5px;background:#fff;border:1px solid #8a8886;box-sizing:border-box;border-radius:1px"></div>
<div class="t" style="left:502.90px;top:278.00px;font-size:8.6px;line-height:8.6px;color:#4a6fdc;font-weight:400;transform:scale(0.9318,1.0000);transform-origin:0 7px;">ISO20022</div>
<svg class="r" style="left:581.3px;top:278.7px;overflow:visible" width="10.20" height="6.50" viewBox="0 0 10.20 6.50"><path d="M1 1.50 L5.10 5.00 L9.20 1.50" fill="none" stroke="#7a7876" stroke-width="1"/></svg>
<div class="r" style="left:39px;top:306px;width:595px;height:183px;background:#fff;box-shadow:0 1px 2px rgba(0,0,0,0.12)"></div>
<div class="t" style="left:44.50px;top:313.00px;font-size:9.1px;line-height:9.1px;color:#323130;font-weight:400;transform:scale(0.9482,1.0000);transform-origin:0 7px;-webkit-text-stroke:0.4px #323130">Invoice lines</div>
<div class="r" style="left:39px;top:328.8px;width:595px;height:1.5px;background:#e1dfdd"></div>
<svg class="r" style="left:47px;top:334px" width="9" height="9" viewBox="0 0 9 9"><path d="M4.5 0 V9 M0 4.5 H9" stroke="#93a9bb" stroke-width="0.9"/></svg>
<div class="t" style="left:58.50px;top:335.00px;font-size:9.0px;line-height:9.0px;color:#2279a2;font-weight:400;transform:scale(0.9590,1.0000);transform-origin:0 7px;">Add line</div>
<svg class="r" style="left:97.5px;top:334px" width="7" height="9" viewBox="0 0 7 9"><rect x="0.8" y="1.8" width="5.4" height="6.7" fill="none" stroke="#6a9bc3" stroke-width="0.9"/><path d="M0 1.2 H7 M2.5 3.5 V7 M4.5 3.5 V7" stroke="#6a9bc3" stroke-width="0.7"/></svg>
<div class="t" style="left:108.70px;top:335.00px;font-size:9.0px;line-height:9.0px;color:#2279a2;font-weight:400;transform:scale(0.8889,1.0000);transform-origin:0 7px;">Remove</div>
<div class="t" style="left:149.40px;top:335.00px;font-size:9.0px;line-height:9.0px;color:#2279a2;font-weight:400;transform:scale(0.9665,1.0000);transform-origin:0 7px;">Distribute amounts</div>
<svg class="r" style="left:234px;top:334px" width="6" height="10" viewBox="0 0 6 10"><path d="M1 3 V7.5 A2 2 0 0 0 5 7.5 V2.5 A1.5 1.5 0 0 0 2 2.5 V7" fill="none" stroke="#6a9bc3" stroke-width="1"/></svg>
<div class="t" style="left:243.70px;top:335.00px;font-size:9.0px;line-height:9.0px;color:#2279a2;font-weight:400;transform:scale(0.9456,1.0000);transform-origin:0 7px;">Notes and attachments (0)</div>
<div class="t" style="left:356.50px;top:335.00px;font-size:9.0px;line-height:9.0px;color:#2279a2;font-weight:400;transform:scale(0.9291,1.0000);transform-origin:0 7px;">Copy selected lines</div>
<svg class="r" style="left:431px;top:336.5px;overflow:visible" width="10.00" height="6.00" viewBox="0 0 10.00 6.00"><path d="M1 1.50 L5.00 4.50 L9.00 1.50" fill="none" stroke="#4f8fb0" stroke-width="1"/></svg>
<div class="r" style="left:81px;top:348.5px;width:111.5px;height:17px;background:#ffff00"></div>
<div class="r" style="left:273.2px;top:348.5px;width:81.7px;height:17px;background:#ffff00"></div>
<div class="r" style="left:355.8px;top:348.5px;width:80.8px;height:17px;background:#ffff00"></div>
<div class="r" style="left:44px;top:365.5px;width:590px;height:17px;background:#d3e6eb"></div>
<div class="r" style="left:43.5px;top:348px;width:591px;height:1px;background:#e1dfdd"></div>
<div class="r" style="left:43.5px;top:365px;width:591px;height:1px;background:#e1dfdd"></div>
<div class="r" style="left:43.5px;top:382px;width:591px;height:1px;background:#e1dfdd"></div>
<div class="r" style="left:43.5px;top:398.5px;width:564px;height:1px;background:#e1dfdd"></div>
<div class="r" style="left:43.5px;top:478px;width:591px;height:1px;background:#e1dfdd"></div>
<div class="r" style="left:43.5px;top:348px;width:1px;height:131px;background:#e1dfdd"></div>
<div class="r" style="left:64.2px;top:348.5px;width:1px;height:51px;background:#e1dfdd"></div>
<div class="r" style="left:80.7px;top:348.5px;width:1px;height:51px;background:#e1dfdd"></div>
<div class="r" style="left:192.5px;top:348.5px;width:1px;height:51px;background:#e1dfdd"></div>
<div class="r" style="left:272.5px;top:348.5px;width:1px;height:51px;background:#e1dfdd"></div>
<div class="r" style="left:355.3px;top:348.5px;width:1px;height:51px;background:#e1dfdd"></div>
<div class="r" style="left:436.6px;top:348.5px;width:1px;height:51px;background:#e1dfdd"></div>
<div class="r" style="left:487.5px;top:348.5px;width:1px;height:51px;background:#e1dfdd"></div>
<div class="r" style="left:538.6px;top:348.5px;width:1px;height:51px;background:#e1dfdd"></div>
<div class="r" style="left:590.1px;top:348.5px;width:1px;height:51px;background:#e1dfdd"></div>
<div class="r" style="left:43.5px;top:365.5px;width:1.8px;height:17px;background:#1b6f93"></div>
<div class="r" style="left:49.3px;top:352.7px;width:9px;height:9px;box-sizing:border-box;border:1px solid #605e5c;border-radius:50%"></div>
<svg class="r" style="left:68.5px;top:353.5px" width="8" height="8" viewBox="0 0 8 8"><path d="M1.2 3.6 A2.9 2.9 0 0 1 6.6 2.6 M6.8 4.4 A2.9 2.9 0 0 1 1.4 5.4" fill="none" stroke="#797775" stroke-width="0.9"/><path d="M5.2 2.4 L6.7 2.7 L6.9 1.2 M2.8 5.6 L1.3 5.3 L1.1 6.8" fill="none" stroke="#797775" stroke-width="0.7"/></svg>
<div class="t" style="left:83.40px;top:354.00px;font-size:8.4px;line-height:8.4px;color:#323130;font-weight:400;transform:scale(0.9595,1.0000);transform-origin:0 7px;">Description</div>
<div class="t" style="left:195.00px;top:354.00px;font-size:8.4px;line-height:8.4px;color:#323130;font-weight:400;transform:scale(0.9604,1.0000);transform-origin:0 7px;">Main account</div>
<div class="t" style="left:275.80px;top:354.00px;font-size:8.4px;line-height:8.4px;color:#323130;font-weight:400;transform:scale(0.9472,1.0000);transform-origin:0 7px;">Sales tax group</div>
<div class="t" style="left:357.50px;top:354.00px;font-size:8.4px;line-height:8.4px;color:#323130;font-weight:400;transform:scale(0.9624,1.0000);transform-origin:0 7px;">Item sales tax group</div>
<div class="t" style="left:453.70px;top:354.00px;font-size:8.4px;line-height:8.4px;color:#323130;font-weight:400;transform:scale(1.0099,1.0000);transform-origin:0 7px;">Quantity</div>
<div class="t" style="left:501.40px;top:354.00px;font-size:8.4px;line-height:8.4px;color:#323130;font-weight:400;transform:scale(0.9890,1.0000);transform-origin:0 7px;">Unit price</div>
<div class="t" style="left:558.20px;top:354.00px;font-size:8.4px;line-height:8.4px;color:#323130;font-weight:400;transform:scale(0.9952,1.0000);transform-origin:0 7px;">Amount</div>
<svg class="r" style="left:48.9px;top:369.6px" width="9.5" height="9.5" viewBox="0 0 10 10"><circle cx="5" cy="5" r="4.8" fill="#1b6f93"/><path d="M2.8 5.2 L4.3 6.7 L7.3 3.6" fill="none" stroke="#fff" stroke-width="1"/></svg>
<div class="t" style="left:84.00px;top:371.00px;font-size:8.4px;line-height:8.4px;color:#323130;font-weight:400;transform:scale(1.0125,1.0000);transform-origin:0 7px;">Invoice text line 1</div>
<div class="t" style="left:195.00px;top:371.00px;font-size:8.4px;line-height:8.4px;color:#323130;font-weight:400;transform:scale(1.0166,1.0000);transform-origin:0 7px;">3000</div>
<svg class="r" style="left:261px;top:371.5px;overflow:visible" width="8.00" height="5.40" viewBox="0 0 8.00 5.40"><path d="M1 1.50 L4.00 3.90 L7.00 1.50" fill="none" stroke="#7a7876" stroke-width="1"/></svg>
<div class="t" style="left:276.60px;top:371.00px;font-size:8.4px;line-height:8.4px;color:#3563c8;font-weight:400;transform:scale(0.8941,1.0000);transform-origin:0 7px;">K1</div>
<svg class="r" style="left:342.3px;top:371.2px;overflow:visible" width="8.30" height="5.40" viewBox="0 0 8.30 5.40"><path d="M1 1.50 L4.15 3.90 L7.30 1.50" fill="none" stroke="#7a7876" stroke-width="1"/></svg>
<div class="t" style="left:358.30px;top:371.00px;font-size:8.4px;line-height:8.4px;color:#3563c8;font-weight:400;transform:scale(0.9731,1.0000);transform-origin:0 7px;">Høy</div>
<svg class="r" style="left:423.5px;top:371.2px;overflow:visible" width="8.50" height="5.40" viewBox="0 0 8.50 5.40"><path d="M1 1.50 L4.25 3.90 L7.50 1.50" fill="none" stroke="#7a7876" stroke-width="1"/></svg>
<div class="t" style="left:469.00px;top:371.00px;font-size:8.4px;line-height:8.4px;color:#323130;font-weight:400;">1,00</div>
<div class="t" style="left:503.30px;top:371.00px;font-size:8.4px;line-height:8.4px;color:#323130;font-weight:400;transform:scale(1.0147,1.0000);transform-origin:0 7px;">2 000,00</div>
<div class="t" style="left:554.10px;top:371.00px;font-size:8.4px;line-height:8.4px;color:#323130;font-weight:400;transform:scale(1.0056,1.0000);transform-origin:0 7px;">2 000,00</div>
<div class="t" style="left:84.00px;top:388.00px;font-size:8.4px;line-height:8.4px;color:#323130;font-weight:400;transform:scale(1.0125,1.0000);transform-origin:0 7px;">Invoice text line 2</div>
<div class="t" style="left:195.00px;top:388.00px;font-size:8.4px;line-height:8.4px;color:#323130;font-weight:400;transform:scale(1.0166,1.0000);transform-origin:0 7px;">3000</div>
<div class="t" style="left:276.60px;top:388.00px;font-size:8.4px;line-height:8.4px;color:#323130;font-weight:400;transform:scale(0.8941,1.0000);transform-origin:0 7px;">K1</div>
<div class="t" style="left:358.30px;top:388.00px;font-size:8.4px;line-height:8.4px;color:#323130;font-weight:400;transform:scale(0.9731,1.0000);transform-origin:0 7px;">Høy</div>
<div class="t" style="left:469.00px;top:388.00px;font-size:8.4px;line-height:8.4px;color:#323130;font-weight:400;">1,00</div>
<div class="t" style="left:503.30px;top:388.00px;font-size:8.4px;line-height:8.4px;color:#323130;font-weight:400;transform:scale(1.0147,1.0000);transform-origin:0 7px;">3 000,00</div>
<div class="t" style="left:554.10px;top:388.00px;font-size:8.4px;line-height:8.4px;color:#323130;font-weight:400;transform:scale(1.0056,1.0000);transform-origin:0 7px;">3 000,00</div>
<svg class="r" style="left:595px;top:369px" width="7" height="8.5" viewBox="0 0 7 8.5"><path d="M0.5 0.5 H4.2 L6.5 2.8 V8 H0.5 Z" fill="none" stroke="#8a8886" stroke-width="0.8"/><path d="M4 0.5 L6.5 3 H4 Z" fill="#6a6866"/></svg>
<svg class="r" style="left:595px;top:385.7px" width="7" height="8.5" viewBox="0 0 7 8.5"><path d="M0.5 0.5 H4.2 L6.5 2.8 V8 H0.5 Z" fill="none" stroke="#8a8886" stroke-width="0.8" stroke-dasharray="1.2 0.8"/><path d="M4 0.5 L6.5 3 H4 Z" fill="#6a6866"/></svg>
<div class="r" style="left:39px;top:492.3px;width:595px;height:112px;background:#fff;box-shadow:0 -1px 2px rgba(0,0,0,0.08)"></div>
<div class="t" style="left:44.40px;top:500.00px;font-size:9.1px;line-height:9.1px;color:#323130;font-weight:400;transform:scale(0.9534,1.0000);transform-origin:0 7px;-webkit-text-stroke:0.4px #323130">Line details</div>
<div class="r" style="left:39px;top:516px;width:595px;height:1.2px;background:#c8c6c4"></div>
<div class="t" style="left:44.90px;top:528.00px;font-size:9.1px;line-height:9.1px;color:#323130;font-weight:400;transform:scale(0.8952,1.0000);transform-origin:0 7px;">General</div>
<div class="r" style="left:44.9px;top:540px;width:29px;height:2px;background:#2f86a6"></div>
<div class="t" style="left:90.80px;top:528.00px;font-size:9.1px;line-height:9.1px;color:#605e5c;font-weight:400;transform:scale(0.8635,1.0000);transform-origin:0 7px;">Reasons</div>
<div class="t" style="left:138.20px;top:528.00px;font-size:9.1px;line-height:9.1px;color:#605e5c;font-weight:400;transform:scale(0.9475,1.0000);transform-origin:0 7px;">Foreign trade</div>
<div class="t" style="left:206.30px;top:528.00px;font-size:9.1px;line-height:9.1px;color:#605e5c;font-weight:400;transform:scale(0.9332,1.0000);transform-origin:0 7px;">Financial dimensions line</div>
<div class="t" style="left:317.90px;top:528.00px;font-size:9.1px;line-height:9.1px;color:#605e5c;font-weight:400;transform:scale(0.9222,1.0000);transform-origin:0 7px;">Project</div>
<div class="r" style="left:43.6px;top:551.2px;width:47.2px;height:11.1px;background:#ffff00"></div>
<div class="t" style="left:44.90px;top:554.00px;font-size:8.6px;line-height:8.6px;color:#484644;font-weight:400;transform:scale(0.9399,1.0000);transform-origin:0 7px;">Invoice text</div>
<div class="r" style="left:44.4px;top:564.3px;width:126px;height:45px;background:#fff;border:1px solid #8a8886;box-sizing:border-box;border-radius:1px"></div>
<div class="t" style="left:47.80px;top:572.00px;font-size:9.3px;line-height:9.3px;color:#323130;font-weight:400;transform:scale(0.9187,1.0000);transform-origin:0 7px;">Invoice text line 1</div>
<div class="t" style="left:195.40px;top:554.00px;font-size:8.6px;line-height:8.6px;color:#484644;font-weight:400;transform:scale(0.9204,1.0000);transform-origin:0 7px;">Fixed asset number</div>
<div class="r" style="left:195.4px;top:564.3px;width:94px;height:15px;background:#fff;border:1px solid #8a8886;box-sizing:border-box;border-radius:1px"></div>
<svg class="r" style="left:277px;top:568.5px;overflow:visible" width="10.70" height="6.30" viewBox="0 0 10.70 6.30"><path d="M1 1.50 L5.35 4.80 L9.70 1.50" fill="none" stroke="#7a7876" stroke-width="1"/></svg>
<div class="t" style="left:347.00px;top:554.00px;font-size:8.6px;line-height:8.6px;color:#484644;font-weight:400;transform:scale(0.9058,1.0000);transform-origin:0 7px;">Book</div>
<div class="r" style="left:347px;top:564.3px;width:93.5px;height:15px;background:#fff;border:1px solid #8a8886;box-sizing:border-box;border-radius:1px"></div>
<svg class="r" style="left:428.3px;top:568.5px;overflow:visible" width="10.70" height="6.30" viewBox="0 0 10.70 6.30"><path d="M1 1.50 L5.35 4.80 L9.70 1.50" fill="none" stroke="#7a7876" stroke-width="1"/></svg>
<div class="t" style="left:497.90px;top:554.00px;font-size:8.6px;line-height:8.6px;color:#484644;font-weight:400;transform:scale(0.9434,1.0000);transform-origin:0 7px;">Dimension account</div>
<div class="r" style="left:497.9px;top:564.3px;width:126px;height:15px;background:#f3f2f1"></div>
</div>
<div id="frame"></div>
</body></html>
